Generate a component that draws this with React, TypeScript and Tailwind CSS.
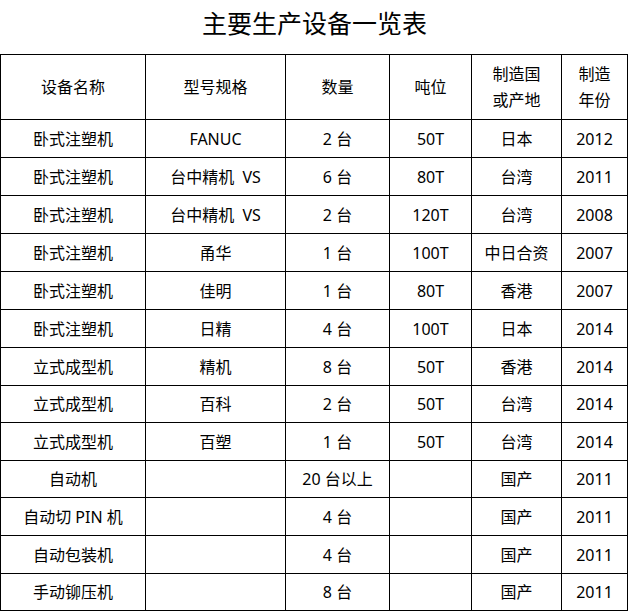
const headers = ["设备名称", "型号规格", "数量", "吨位"];

const rows: string[][] = [
  ["卧式注塑机", "FANUC", "2 台", "50T", "日本", "2012"],
  ["卧式注塑机", "台中精机  VS", "6 台", "80T", "台湾", "2011"],
  ["卧式注塑机", "台中精机  VS", "2 台", "120T", "台湾", "2008"],
  ["卧式注塑机", "甬华", "1 台", "100T", "中日合资", "2007"],
  ["卧式注塑机", "佳明", "1 台", "80T", "香港", "2007"],
  ["卧式注塑机", "日精", "4 台", "100T", "日本", "2014"],
  ["立式成型机", "精机", "8 台", "50T", "香港", "2014"],
  ["立式成型机", "百科", "2 台", "50T", "台湾", "2014"],
  ["立式成型机", "百塑", "1 台", "50T", "台湾", "2014"],
  ["自动机", "", "20 台以上", "", "国产", "2011"],
  ["自动切 PIN 机", "", "4 台", "", "国产", "2011"],
  ["自动包装机", "", "4 台", "", "国产", "2011"],
  ["手动铆压机", "", "8 台", "", "国产", "2011"],
];

const cell =
  "flex items-center justify-center bg-white text-center whitespace-pre";

export default function App() {
  return (
    <div className="h-[611px] w-[629px] bg-white font-['Noto_Sans','Noto_Sans_CJK_SC',sans-serif] text-black">
      <h1 className="flex h-[54px] items-center justify-center pb-[9px] font-['Noto_Sans_CJK_SC',sans-serif] text-[25px] font-normal leading-none">
        主要生产设备一览表
      </h1>

      <div className="grid w-[628px] grid-cols-[144px_139px_103px_81px_89px_65px] grid-rows-[64px_repeat(7,37px)_36px_37px_36px_37px_37px_36px] gap-px bg-black p-px text-[16px] leading-[26px]">
        {headers.map((h) => (
          <div key={h} className={cell}>
            {h}
          </div>
        ))}
        <div className={cell}>
          制造国
          <br />
          或产地
        </div>
        <div className={cell}>
          制造
          <br />
          年份
        </div>

        {rows.map((r, i) =>
          r.map((v, j) => (
            <div key={`${i}-${j}`} className={cell}>
              {v}
            </div>
          ))
        )}
      </div>
    </div>
  );
}
